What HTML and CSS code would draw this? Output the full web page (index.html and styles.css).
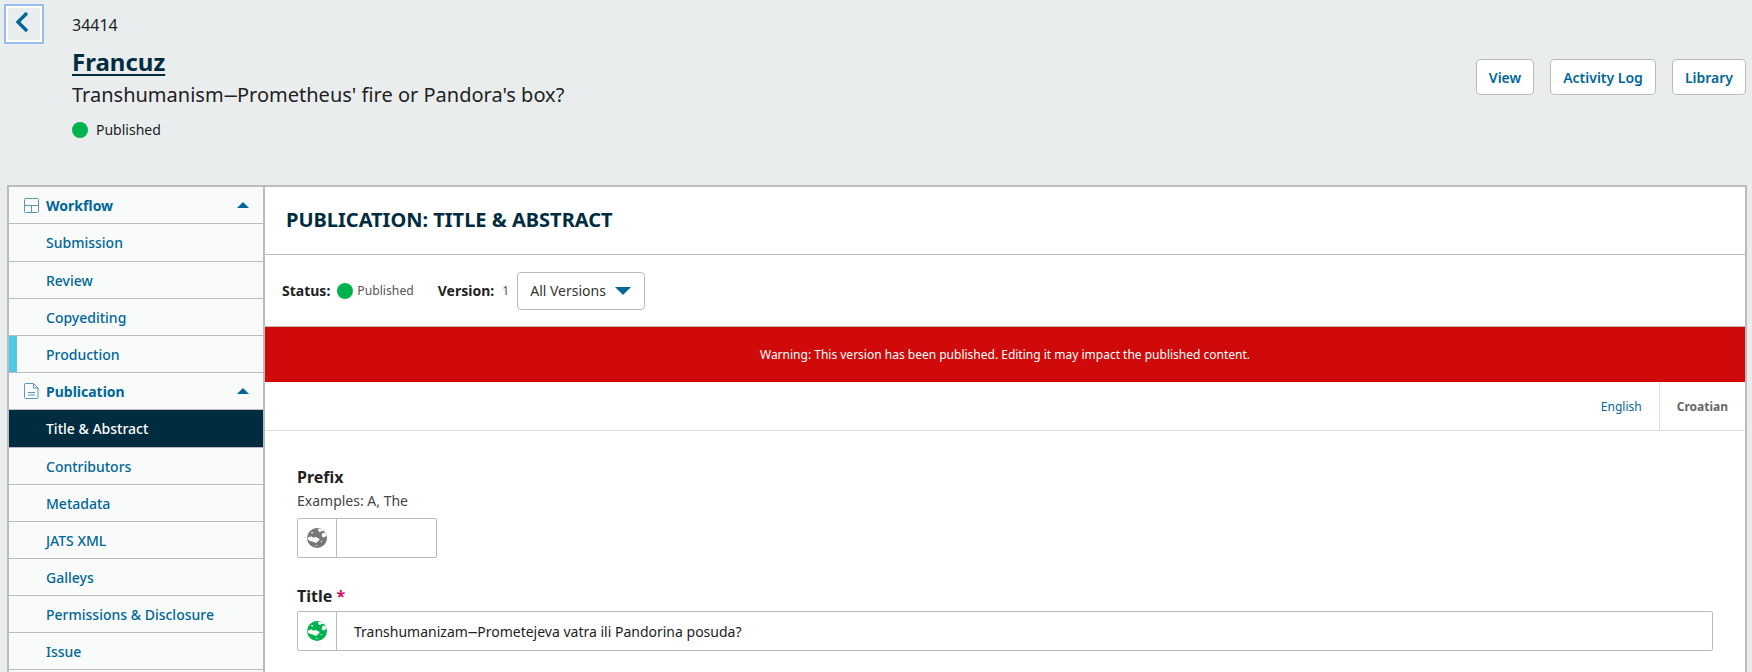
FILE: index.html
```html
<!DOCTYPE html>
<html lang="en">
<head>
<meta charset="utf-8">
<title>Francuz</title>
<link rel="stylesheet" href="styles.css">
</head>
<body>
<header class="top">
  <a class="back" href="#"><svg width="14" height="22" viewBox="0 0 14 22"><path d="M12 2 L3 11 L12 20" fill="none" stroke="#006798" stroke-width="3.4"/></svg></a>
  <div class="heading">
    <div class="sub-id">34414</div>
    <h1 class="author"><a href="#">Francuz</a></h1>
    <div class="sub-title">Transhumanism<span class="dash">—</span>Prometheus' fire or Pandora's box?</div>
    <div class="status"><span class="dot"></span><span>Published</span></div>
  </div>
  <div class="actions">
    <a class="btn" href="#">View</a>
    <a class="btn" href="#">Activity Log</a>
    <a class="btn" href="#">Library</a>
  </div>
</header>
<div class="panel">
  <nav class="side">
    <a class="row group" href="#">
      <svg class="gi" width="15" height="15" viewBox="0 0 15 15"><path d="M1.500 .5h12a1 1 0 0 1 1 1v12a1 1 0 0 1-1 1h-12a1 1 0 0 1-1-1v-12a1 1 0 0 1 1-1zM.5 7.500h14M7.500 7.500v7" fill="none" stroke="#5d97b8"/></svg>
      <span>Workflow</span><i class="up"></i></a>
    <a class="row tall" href="#">Submission</a>
    <a class="row" href="#">Review</a>
    <a class="row" href="#">Copyediting</a>
    <a class="row cur" href="#">Production</a>
    <a class="row group" href="#">
      <svg class="gi" width="15" height="16" viewBox="0 0 15 16"><path d="M1.500 .5h8l4.500 4.500v9.500a1 1 0 0 1-1 1h-11.500a1 1 0 0 1-1-1v-13a1 1 0 0 1 1-1zM9.500 .5v4.500h4.500M4 9.500h7M4 12h7" fill="none" stroke="#5d97b8"/></svg>
      <span>Publication</span><i class="up"></i></a>
    <a class="row tall active" href="#">Title &amp; Abstract</a>
    <a class="row" href="#">Contributors</a>
    <a class="row" href="#">Metadata</a>
    <a class="row" href="#">JATS XML</a>
    <a class="row" href="#">Galleys</a>
    <a class="row" href="#">Permissions &amp; Disclosure</a>
    <a class="row" href="#">Issue</a>
  </nav>
  <main class="content">
    <h2 class="title">PUBLICATION: TITLE &amp; ABSTRACT</h2>
    <div class="meta">
      <b class="lbl">Status:</b><span class="dot"></span><span class="val">Published</span>
      <b class="lbl ver">Version:</b><span class="val num">1</span>
      <div class="select"><span>All Versions</span><i class="down"></i></div>
    </div>
    <div class="warn">Warning: This version has been published. Editing it may impact the published content.</div>
    <div class="tabs"><a class="tab" href="#">English</a><a class="tab on" href="#">Croatian</a></div>
    <form class="form">
      <div class="field">
        <label class="flabel">Prefix</label>
        <div class="hint">Examples: A, The</div>
        <div class="input short">
          <span class="loc"><svg class="globe" width="20" height="20" viewBox="0 0 20 20"><use href="#g"/></svg></span>
          <span class="txt"></span>
        </div>
      </div>
      <div class="field">
        <label class="flabel">Title <em>*</em></label>
        <div class="input long">
          <span class="loc filled"><svg class="globe" width="20" height="20" viewBox="0 0 20 20"><use href="#g"/></svg></span>
          <span class="txt"><span>Transhumanizam<span class="dash">—</span>Prometejeva vatra ili Pandorina posuda?</span></span>
        </div>
      </div>
    </form>
  </main>
</div>
<svg class="defs" width="0" height="0"><symbol id="g" viewBox="0 0 20 20"><circle cx="10" cy="10" r="10" fill="currentColor"/><path fill="#fff" d="M11 1.200c2-.5 4.200.1 5.400 1.300-.6 1-1.900.5-2.700 1.100-.5.7-1.500.5-2-.1-.4-.6-.5-1.400-.7-2.300zM15.600 5.200c1-.5 2-.4 2.800-.2.600 1 .9 2 .7 3-.8.5-1.400 1.200-2.200 1.400-.9-.2-1.600-.4-2.200-1.100.1-1.300.3-2.400.9-3.100zM.5 10.600c.6-1.400 2.600-2.400 4.300-2.100.7.600 1.200 1.300 2.100 1.200 1-.7 2.200-.8 3-.1.700.7 1.900.8 2.500 1.400.3 1-.4 1.800-1.300 2-.5.900-1.100 1.600-2.100 1.500-.8.500-1.500.2-2-.4-.9 0-1.400-.6-2.100-1.100-.9.400-2 .2-2.600-.5-.7-.4-1.300-.7-1.800-1.400zM3.800 4.800c.9-.7 2-.6 2.900 0-.7.800-2 .9-2.900 0zM8 17c.9.500 2.300.500 3.300.1-.4 1.100-2.800 1.100-3.300-.1zM13.500 13.400c.8-.3 1.500-.1 2 .3-.5.600-1.500.7-2-.3z"/></symbol></svg>
</body>
</html>
```
FILE: styles.css
```css
* { box-sizing: border-box; }
html, body { margin: 0; height: 672px; overflow: hidden; }
body { background: #eaedee; font-family: "Noto Sans", sans-serif; font-size: 14px; color: #222; }
a { text-decoration: none; color: #006798; }

.top { height: 185px; display: flex; align-items: flex-start; padding-right: 6px; }
.back { width: 36px; height: 36px; margin: 6px 0 0 6px; flex: none; display: flex; align-items: flex-start; padding: 3px 0 0 7px; border: 2px solid #fff; outline: 2px solid #9dbcf2; }
.heading { margin-left: 30px; padding-top: 14px; flex: 1; }
.sub-id { font-size: 16px; line-height: 22px; }
.author { margin: 10px 0 0; font-size: 24px; line-height: 32px; font-weight: 700; }
.author a { color: #002c40; text-decoration: underline; text-underline-offset: 3px; }
.sub-title { font-size: 20px; line-height: 28px; margin-top: 3px; }
.dash { display: inline-block; width: .67em; transform: scaleX(.67); transform-origin: left center; }
.status { display: flex; align-items: center; gap: 8px; font-size: 14px; margin-top: 11px; line-height: 20px; }
.dot { width: 16px; height: 16px; border-radius: 50%; background: #00b24e; display: block; flex: none; }
.actions { display: flex; gap: 16px; padding-top: 59px; }
.btn { height: 36px; padding: 0 12px; display: flex; align-items: center; background: #fff; border: 1px solid #bbb; border-radius: 4px; font-size: 14px; font-weight: 600; }

.panel { display: flex; width: 1740px; height: 487px; margin-left: 7px; border: 2px solid #bbb; border-bottom: 0; }
.side { width: 256px; flex: none; background: #f9fafa; border-right: 2px solid #bbb; }
.row { height: 37px; display: flex; align-items: center; padding-left: 37px; border-bottom: 1px solid #bbb; font-size: 14px; font-weight: 500; position: relative; color: #006798; }
.row.tall { height: 38px; }
.row.group { font-weight: 700; padding-left: 15px; gap: 7px; }
.gi { flex: none; }
.up { position: absolute; right: 14px; top: 15px; border: 6px solid transparent; border-top: 0; border-bottom-color: #006798; }
.cur::before { content: ""; position: absolute; left: 0; top: 0; bottom: 0; width: 8px; background: #4fc9e8; }
.active { background: #002c40; color: #fff; }

.content { flex: 1; background: #fff; min-width: 0; }
.title { margin: 0; height: 68px; padding-left: 21px; padding-bottom: 2px; display: flex; align-items: center; font-size: 20px; font-weight: 700; color: #002c40; border-bottom: 1px solid #bbb; }
.meta { height: 71px; display: flex; align-items: center; padding-left: 17px; font-size: 12.2px; }
.lbl { font-size: 14px; font-weight: 700; }
.meta .dot { margin: 0 4px 0 7px; }
.val { color: #555; }
.ver { margin-left: 24px; }
.num { margin-left: 8px; }
.select { margin-left: 8px; height: 38px; width: 128px; display: flex; align-items: center; padding-left: 12px; gap: 9px; border: 1px solid #bbb; border-radius: 4px; font-size: 14px; color: #333; }
.down { border: 8px solid transparent; border-bottom: 0; border-top-color: #006798; }
.warn { height: 56px; background: #d00a0a; border-top: 1px solid #bbb; color: #fff; font-size: 12px; display: flex; align-items: center; justify-content: center; }
.tabs { height: 49px; display: flex; justify-content: flex-end; border-bottom: 1px solid #ddd; }
.tab { display: flex; align-items: center; padding: 0 17px; font-size: 12px; }
.tab.on { color: #666; font-weight: 700; border-left: 1px solid #ddd; }
.form { padding: 34px 0 0 32px; }
.field { margin-bottom: 26px; }
.flabel { display: block; font-size: 16px; font-weight: 700; line-height: 24px; }
.flabel em { color: #d00a6c; font-style: normal; }
.hint { font-size: 14px; line-height: 20px; color: #444; margin: 2px 0 7px; }
.input { height: 40px; display: flex; border: 1px solid #bbb; border-radius: 2px; background: #fff; }
.short { width: 140px; }
.long { width: 1416px; margin-top: 3px; }
.loc { width: 39px; flex: none; display: flex; align-items: center; justify-content: center; border-right: 1px solid #bbb; color: #777; }
.loc.filled { color: #00b24e; }
.txt { display: flex; align-items: center; padding-left: 17px; font-size: 14px; color: #222; }
.defs { position: absolute; }
```
